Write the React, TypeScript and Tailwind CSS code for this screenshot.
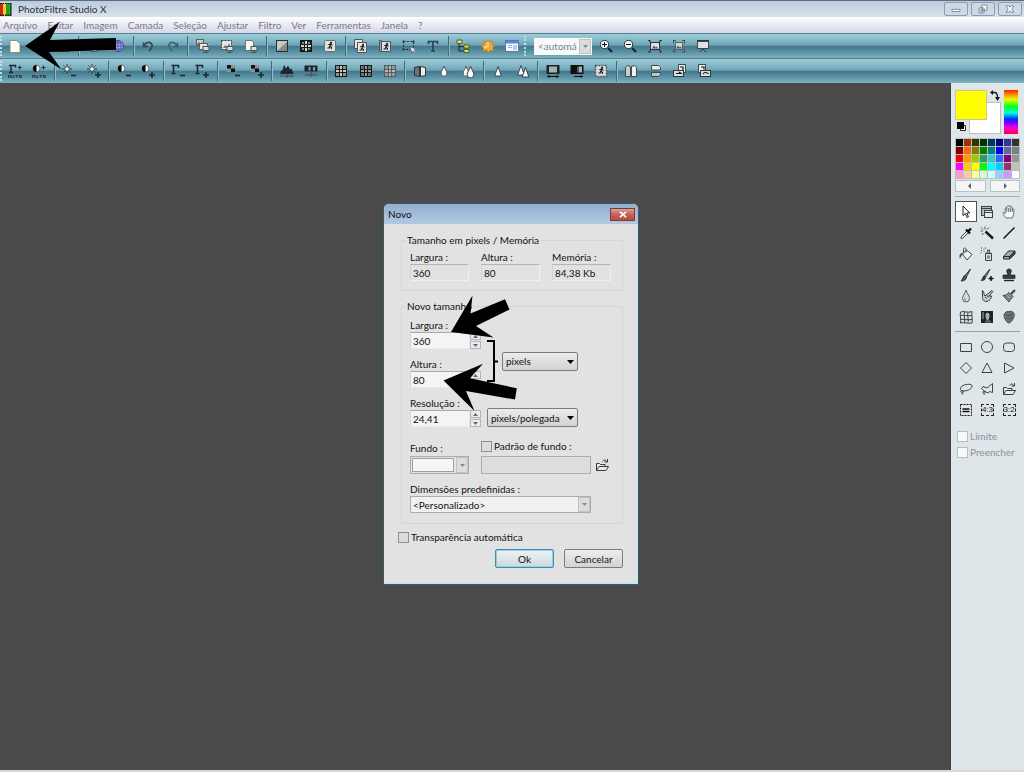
import { useState } from "react";
import type { ReactNode } from "react";

const INK = "#1c2a33";

function Svg({ children, size = 14 }: { children: ReactNode; size?: number }) {
  return (
    <svg width={size} height={size} viewBox="0 0 14 14" fill="none" aria-hidden="true" className="shrink-0">
      {children}
    </svg>
  );
}

const runner = (x: number, y: number) => (
  <g transform={`translate(${x} ${y})`} stroke="#111" strokeWidth="1.1">
    <circle cx="3.6" cy="0.8" r="0.5" fill="#111" />
    <path d="M3.2 2 2.4 4.2 4 5.4 3.6 7M2.4 4.2 1.6 6H0M0.8 2.8 3.2 2 5 3.4" />
  </g>
);

const monitor = (x: number, y: number) => (
  <g transform={`translate(${x} ${y})`}>
    <rect x="0.5" y="0.5" width="6" height="4" fill="#dde0e2" stroke="#4b5257" />
    <path d="M3.5 5v1.5M1 6.5h5" stroke="#4b5257" />
  </g>
);

const gridSquares = (bg: string, fg: string) => (
  <>
    <rect x="1" y="1" width="12" height="12" fill={bg} />
    <path d="M2 2h3v3H2zM6 2h2v3H6zM9 2h3v3H9zM2 6h3v2H2zM6 6h2v2H6zM9 6h3v2H9zM2 9h3v3H2zM6 9h2v3H6zM9 9h3v3H9z" fill={fg} />
    <path d="M2 2h3v3H2zM9 2h3v3H9zM2 9h3v3H2zM9 9h3v3H9z" fill={bg} opacity="0.35" />
  </>
);

const plus = <path d="M11 8v6M8 11h6" stroke={INK} strokeWidth="1.6" />;
const minus = <path d="M9 11.5h5" stroke={INK} strokeWidth="1.6" />;
const sun = (
  <>
    <circle cx="5" cy="5" r="2.2" fill="#fff" stroke={INK} strokeWidth="0.8" />
    <path d="M5 0v2M5 8v2M0 5h2M8 5h2M1.5 1.5l1.2 1.2M7.4 7.4l1.2 1.2M8.5 1.5 7.3 2.7M1.5 8.5l1.2-1.2" stroke={INK} strokeWidth="0.9" />
  </>
);
const half = (
  <>
    <circle cx="4.5" cy="4.5" r="3.4" fill="#f5f5f5" stroke={INK} strokeWidth="0.6" />
    <path d="M4.5 1a3.5 3.5 0 0 0 0 7z" fill="#000" />
  </>
);
const gamma = <path d="M0.5 1.500h7.500M7.500 1v3M2.500 1.500v8M0.500 9.500h4" stroke={INK} strokeWidth="1.5" />;
const checks = (
  <>
    <rect x="1" y="1" width="8" height="7" fill="#8d9497" />
    <path d="M1 1h4v3.5H1zM5 4.5h4V8H5z" fill="#111" />
  </>
);
const auto = <path d="M0.5 14v-2.5h2V14M4 11.5V14h2v-2.5M7.5 11.5h2.5M8.7 11.5V14M11.3 11.5h2V14h-2z" stroke={INK} strokeWidth="0.8" />;
const drop = (x: number, s: number) => (
  <path transform={`translate(${x} 2) scale(${s})`} d="M3.5 0C3 2.6.6 5 .6 7.4a2.9 2.9 0 0 0 5.8 0C6.4 5 4 2.6 3.5 0z" fill="#fafafa" stroke="#44515a" strokeWidth="0.9" />
);
const cone = (x: number, y: number) => (
  <path d={`M${x} ${y}l3.4 9.5h-6.8z`} fill="#fafafa" stroke="#2b3840" strokeWidth="0.9" />
);

const icons: Record<string, ReactNode> = {
  novo: <path d="M2 1.500h6.500l3.500 3v9H2z" fill="#fffef2" stroke="#7b8180" strokeWidth="0.8" />,
  abrir: <path d="M1 12V3h4l1 1.500h6V12z" fill="#e3c36a" stroke="#555" />,
  salvar: <path d="M1.500 1.500h11v11h-11zM4 2v4h6V2M4 12V8h6v4" fill="#ccd" stroke="#445" />,
  imprimir: <path d="M1.500 5.500h11v5h-11zM3.500 5V1.500h7V5M3.500 10.500v2h7v-2" fill="#d8dadc" stroke="#4b5257" />,
  internet: (
    <>
      <circle cx="7" cy="7" r="5.500" fill="#aab4ea" stroke="#3e3f9a" />
      <path d="M1.500 7h11M7 1.500v11M2.500 4h9M2.500 10h9M7 1.500c-4 3-4 8 0 11M7 1.500c4 3 4 8 0 11" stroke="#4a3f9a" strokeWidth="0.8" />
    </>
  ),
  desfazer: <path d="M2.500 3.500v4h4M2.500 7.500c2-4.500 7-5.500 8.500-2 1 2.500-1 4-3 6.500" stroke="#33444d" strokeWidth="1.500" />,
  refazer: <path d="M11.500 3.500v4h-4M11.500 7.500c-2-4.500-7-5.500-8.500-2-1 2.500 1 4 3 6.500" stroke="#3f5f6c" strokeWidth="1.500" />,
  duplicar: (
    <>
      <rect x="0.500" y="0.500" width="7" height="6" fill="#c9cdcf" stroke="#59615f" />
      <path d="M1 5l2-2 1.500 1.500L6 3l1 3H1z" fill="#777" />
      <rect x="3.500" y="4.500" width="8" height="6" fill="#ebe6dc" stroke="#59615f" />
      {monitor(6.500, 7)}
    </>
  ),
  tamanho: (
    <>
      <rect x="1.500" y="1.500" width="10" height="9" fill="#e6e8e8" stroke="#30383c" strokeDasharray="2 1" />
      <path d="M3 9l2-3 2 2 2-4 2 5" fill="#777" />
      {monitor(6.500, 7)}
    </>
  ),
  tela: (
    <>
      <path d="M1.500 1.500h6l2 2v8h-8z" fill="#fbf9ef" stroke="#6c7376" />
      {monitor(6.500, 7)}
    </>
  ),
  cinza: (
    <>
      <path d="M2 2h11v10H2z" fill="#868b8e" />
      <path d="M2 2h11L2 12z" fill="#c5c9ca" />
      <rect x="1.500" y="1.500" width="11" height="11" stroke="#262f34" />
    </>
  ),
  indexadas: (
    <>
      <rect x="1" y="1" width="12" height="12" fill="#14191c" />
      <path d="M2 6h3v2H2zM6 2h2v3H6zM9 6h3v2H9zM6 9h2v3H6zM6 6h2v2H6z" fill="#d6d6c6" />
      <path d="M3 3h2v2H3zM9 3h2v2H9zM3 9h2v2H3zM9 9h2v2H9z" fill="#8c9072" />
    </>
  ),
  rgb: (
    <>
      <rect x="1.500" y="1.500" width="11" height="11" rx="1" fill="#dfe1e0" stroke="#6a7073" />
      {runner(4.500, 3)}
    </>
  ),
  camada: (
    <>
      <path d="M1.500 0.500h8v9h-8z" fill="#e8e8e0" stroke="#4f575b" />
      <path d="M4.500 3.500h9v10h-9z" fill="#e8e8e0" stroke="#4f575b" />
      {runner(6.500, 5)}
    </>
  ),
  mesclar: (
    <>
      <path d="M1.500 1.500h2v11h-2z" fill="#98a0a4" stroke="#4f575b" />
      <path d="M3.500 2.500h9v10h-9z" fill="#dcdfe3" stroke="#4f575b" />
      {runner(5.500, 4)}
    </>
  ),
  selecao: (
    <>
      <path d="M1.500 2.500h10v7M1.500 2.500v8h7" stroke="#1c2a33" strokeDasharray="2 1.500" />
      <path d="M0.500 1.500h2v2h-2zM10.500 1.500h2v2h-2zM0.500 9.500h2v2h-2z" fill="#333c41" />
      <path d="M8 8l6 2-2 1.200 2 2-1 .8-2-2-1 2z" fill="#e9edf2" stroke="#555c70" strokeWidth="0.600" />
    </>
  ),
  texto: <path d="M2.500 5v-2.500h9V5M7 2.500v9.500M5 12h4" stroke="#2b4450" strokeWidth="1.700" />,
  explorer: (
    <>
      <path d="M3 5v7h6M3 7.500h6" stroke="#20282c" />
      <path d="M1 1h5v3.500H1zM8 6h5v3H8zM8 10.500h5v3H8z" fill="#dfe04c" stroke="#3e4a20" strokeWidth="0.800" />
    </>
  ),
  plugins: (
    <>
      <path d="M3 1.500l2.500 1.700L7 .5l1.500 2.700L12 2l-1 3.300 2.700 1.700L11.500 9l1.500 3-3.500-.7L7 13.500 5.500 11 2 12.500l.7-3.500L.3 7l3-1.500z" fill="#efaa34" stroke="#b87418" strokeWidth="0.600" />
      <path d="M7 3v4l-4 2" stroke="#fbe6a6" strokeWidth="1.300" />
    </>
  ),
  painel: (
    <>
      <rect x="0.500" y="1.500" width="13" height="11" fill="#f4f7fd" stroke="#5a77b4" />
      <path d="M1 2h12v2.500H1z" fill="#5f87d2" />
      <path d="M3 6.500h4M3 8.500h4" stroke="#9fb0d0" />
      <rect x="8" y="6" width="4" height="5" fill="#b9c9e8" />
    </>
  ),
  mais: (
    <>
      <circle cx="5.500" cy="5.500" r="4.200" fill="#eef5f7" stroke="#26353d" />
      <path d="M5.500 3v5M3 5.500h5" stroke="#111" />
      <path d="M9 9l4 4" stroke="#182040" strokeWidth="2.200" />
    </>
  ),
  menos: (
    <>
      <circle cx="5.500" cy="5.500" r="4.200" fill="#eef5f7" stroke="#26353d" />
      <path d="M3 5.500h5" stroke="#111" />
      <path d="M9 9l4 4" stroke="#182040" strokeWidth="2.200" />
    </>
  ),
  ajustar: (
    <>
      <rect x="2.500" y="3.500" width="9" height="7" fill="#dfe3e3" stroke="#30383c" />
      <path d="M4 9.500l2-3 1.500 2 1-1 2 2" fill="#555" />
      <path d="M0.500 1.500l3 2.500M13.500 1.500l-3 2.500M0.500 13l3-2.500M13.500 13l-3-2.500M0.500 1.500h2M11.500 1.500h2M0.500 13h2M11.500 13h2" stroke="#20292e" />
    </>
  ),
  real: (
    <>
      <rect x="3.500" y="3.500" width="7" height="7" fill="#d4d9da" stroke="#556268" />
      <path d="M4 9.500l2-3 1.500 2 1-1 1.500 2" fill="#555" />
      <path d="M1 1.500h3M10 1.500h3M1 13h3M10 13h3M1.500 1.500v3M12.500 1.500v3M1.500 13v-3M12.500 13v-3" stroke="#45545b" />
    </>
  ),
  cheia: (
    <>
      <path d="M1 2h12" stroke="#2b363c" strokeWidth="2" />
      <rect x="1.500" y="2.500" width="11" height="7" fill="#dfe3e4" stroke="#3b474d" />
      <path d="M4 13l3-3 3 3" stroke="#2b363c" />
    </>
  ),
  nivelAuto: (
    <>
      <path d="M1 1.500h7M7.500 1v2.500M3 1.500v7M1 8.500h4" stroke={INK} strokeWidth="1.500" />
      <path d="M10 3.500h3.500M11.700 1.500v4" stroke={INK} />
      {auto}
    </>
  ),
  contrasteAuto: (
    <>
      <circle cx="4.500" cy="4.500" r="3.400" fill="#f5f5f5" stroke={INK} strokeWidth="0.600" />
      <path d="M4.500 1a3.500 3.500 0 0 0 0 7z" fill="#000" />
      <path d="M9.500 3.500h4M11.500 1.500v4" stroke={INK} />
      {auto}
    </>
  ),
  brilhoMenos: <>{sun}{minus}</>,
  brilhoMais: <>{sun}{plus}</>,
  contrasteMenos: <>{half}{minus}</>,
  contrasteMais: <>{half}{plus}</>,
  gamaMenos: <>{gamma}{minus}</>,
  gamaMais: <>{gamma}{plus}</>,
  satMenos: <>{checks}{minus}</>,
  satMais: <>{checks}{plus}</>,
  histograma: (
    <>
      <path d="M0.500 10V7.500l2-1.500 1.500-5 2 3.500 2-3 2 4 1.500-1 2 5v.500z" fill="#1b272e" />
      <path d="M0 12h14" stroke="#3d4a51" />
      <path d="M7 10v4" stroke="#3d4a51" />
    </>
  ),
  niveis: (
    <>
      <rect x="0.500" y="1.500" width="13" height="6" fill="#1b272e" />
      <path d="M4.500 3h2v3.500h-2zM9 3h2v3.500H9z" fill="#8f9a9f" />
      <path d="M1 11h12M7 8v5" stroke="#3d4a51" />
    </>
  ),
  grade1: gridSquares("#14191c", "#d3d2c5"),
  grade2: gridSquares("#14191c", "#98a0a2"),
  grade3: gridSquares("#555c5f", "#b3babb"),
  espelho: (
    <>
      <path d="M1.500 3.500l5-1v10l-5-1z" fill="#6c7579" stroke="#2a3236" />
      <path d="M7.500 2.500l5 1v8l-5 1z" fill="#eceeed" stroke="#2a3236" />
    </>
  ),
  suave: drop(3.500, 1),
  muitoSuave: <>{drop(1.500, 1)}{drop(5.500, 1.150)}</>,
  nitidez: cone(7, 2.500),
  muitaNitidez: <>{cone(5, 1.500)}{cone(9.500, 3.500)}</>,
  largura: (
    <>
      <path d="M0.500 1h13v9h-13z" fill="#1b2225" />
      <path d="M3 2.500h8v6H3z" fill="#a9b0b2" />
      <path d="M1 12.500h12M3 11v3M11 11v3" stroke="#111" />
    </>
  ),
  degrade: (
    <>
      <path d="M0.500 1h13v9h-13z" fill="#0d0f10" />
      <path d="M7 2.500h2v6H7z" fill="#52595c" />
      <path d="M9 2.500h3v6H9z" fill="#a9b0b2" />
      <path d="M4 12.500h9M11 11v3" stroke="#111" />
    </>
  ),
  mosaico: (
    <>
      <rect x="1.500" y="1.500" width="11" height="11" fill="#dadcd9" stroke="#4f5a5f" strokeDasharray="2 1" strokeWidth="1.500" />
      {runner(4.500, 3)}
    </>
  ),
  simetriaH: (
    <>
      <path d="M1.500 3.500l2-2 3 1v10h-5z" fill="#c7cbc9" stroke="#414a4f" />
      <path d="M12.500 3.500l-2-2-3 1v10h5z" fill="#f0f1ee" stroke="#414a4f" />
    </>
  ),
  simetriaV: (
    <>
      <path d="M2.500 1.500h7l2 2v2.500h-9z" fill="#eceeec" stroke="#414a4f" />
      <path d="M2.500 8.500h9v2l-2 2h-7z" fill="#bfc5c6" stroke="#414a4f" />
    </>
  ),
  girarE: (
    <>
      <rect x="5.500" y="0.500" width="7" height="8" fill="#eceeec" stroke="#414a4f" />
      <rect x="0.500" y="6.500" width="10" height="6" fill="#dcdfe0" stroke="#2d363a" />
      <path d="M3 9.500h5l-2-1.500M7 3h3v3" stroke="#111" strokeWidth="1.200" />
    </>
  ),
  girarD: (
    <>
      <rect x="1.500" y="0.500" width="7" height="8" fill="#eceeec" stroke="#414a4f" />
      <rect x="3.500" y="6.500" width="10" height="6" fill="#dcdfe0" stroke="#2d363a" />
      <path d="M4 3h3v2.500M6 10c1-2 4-2 5.500 0" stroke="#111" strokeWidth="1.200" />
    </>
  ),
};

const topBar = [
  ["novo", "abrir", "salvar"],
  ["imprimir", "internet"],
  ["desfazer", "refazer"],
  ["duplicar", "tamanho", "tela"],
  ["cinza", "indexadas", "rgb"],
  ["camada", "mesclar", "selecao", "texto"],
  ["explorer", "plugins", "painel"],
];

const zoomBar = [["mais", "menos", "ajustar", "real", "cheia"]];

const filterBar = [
  ["nivelAuto", "contrasteAuto"],
  ["brilhoMenos", "brilhoMais"],
  ["contrasteMenos", "contrasteMais"],
  ["gamaMenos", "gamaMais"],
  ["satMenos", "satMais"],
  ["histograma", "niveis"],
  ["grade1", "grade2", "grade3"],
  ["espelho", "suave", "muitoSuave"],
  ["nitidez", "muitaNitidez"],
  ["largura", "degrade", "mosaico"],
  ["simetriaH", "simetriaV", "girarE", "girarD"],
];

function ToolGroups({ groups, className }: { groups: string[][]; className: string }) {
  return (
    <div className={`flex h-full items-center ${className}`}>
      {groups.map((group, g) => (
        <div key={group[0]} className="contents">
          {g > 0 && (
            <span className="flex h-full w-1.5 shrink-0 items-center justify-center">
              <span className="h-5 w-px bg-[#3f6b79] shadow-[1px_0_0_#8fbecb]" />
            </span>
          )}
          {group.map((name) => (
            <button key={name} type="button" aria-label={name} className="flex min-w-0 flex-1 items-center justify-center pb-px">
              <Svg>{icons[name]}</Svg>
            </button>
          ))}
        </div>
      ))}
    </div>
  );
}

function Grip() {
  return <span className="h-5 w-0 shrink-0 border-l-2 border-dotted border-[#b9dfe9]" />;
}

const palette = [
  "#000000", "#993300", "#333300", "#003300", "#003366", "#000080", "#333399", "#333333",
  "#800000", "#ff6600", "#808000", "#008000", "#008080", "#0000ff", "#666699", "#808080",
  "#ff0000", "#ff9900", "#99cc00", "#339966", "#33cccc", "#3366ff", "#800080", "#969696",
  "#ff00ff", "#ffcc00", "#ffff00", "#00ff00", "#00ffff", "#00ccff", "#993366", "#c0c0c0",
  "#ff99cc", "#ffcc99", "#ffff99", "#ccffcc", "#ccffff", "#99ccff", "#cc99ff", "#ffffff",
];

const S = "#3c4448";

const tools: { name: string; icon: ReactNode }[] = [
  { name: "Seleção", icon: <path d="M4 1v9.500l2.300-2 1.700 4 1.500-.7-1.700-3.800h3z" fill="#fff" stroke="#222" /> },
  {
    name: "Gerenciador de camadas",
    icon: (
      <>
        <rect x="1.500" y="1.500" width="10" height="9" fill="#b4bcc0" stroke={S} />
        <rect x="4.500" y="5.500" width="8" height="7" fill="#e4e8ea" stroke={S} />
        <path d="M2 3.500h9M5 7.500h7" stroke={S} />
      </>
    ),
  },
  { name: "Mão", icon: <path d="M4 13C2 10.500 .5 8.500 1 7.700s1.600 0 2.200 1V3.500c0-1.200 1.600-1.200 1.600 0V2c0-1.300 1.800-1.300 1.800 0V1.500c0-1.200 1.800-1.200 1.800 0v1c0-1.200 1.800-1 1.800 0v2c0-1 1.700-1 1.700.3 0 3-.3 6-1.700 8.200zM4.800 3.500V7M6.600 3V7M8.400 3V7M10.200 4V7" fill="#f4f6f7" stroke="#5c6468" strokeWidth="0.900" /> },
  {
    name: "Conta-gotas",
    icon: (
      <>
        <path d="M8 5l-6 6v1.500h1.500l6-6" fill="#e6e9ea" stroke={S} />
        <path d="M7 3.500l4 4M9 5.500l3-3" stroke="#0a0d0f" strokeWidth="2.400" />
      </>
    ),
  },
  {
    name: "Varinha mágica",
    icon: (
      <>
        <path d="M5.500 5.500l7.500 7" stroke="#16191b" strokeWidth="2.400" />
        <path d="M5 .5v3M1 1.500l2 2M.5 5h2.500M2 9l1.500-2M9 1.500l-2 2" stroke={S} strokeWidth="0.900" />
      </>
    ),
  },
  { name: "Linha", icon: <path d="M1.500 12.500L12.500 1.500" stroke="#1b1f22" strokeWidth="1.600" /> },
  {
    name: "Preenchimento",
    icon: (
      <>
        <path d="M3.500 7l4-4 5.500 4.500-5 5.500z" fill="#f0f1f2" stroke={S} />
        <path d="M7 5.500V2.500c0-2-2.500-2-2.500 0V6" stroke={S} />
        <path d="M4 6c-3 0-4.500 2-3 6 .5-2 1.500-3.500 3-4.500z" fill="#4a5256" />
      </>
    ),
  },
  {
    name: "Spray",
    icon: (
      <>
        <path d="M5.500 6.500h6v7h-6zM6.500 6c0-1.500 4-1.500 4 0M7.500 4.500V3h2v1.500" fill="#d9dddf" stroke={S} />
        <path d="M7 8.500h3v3H7z" fill="#7d868a" />
        <path d="M1 1h1M3.500 2h1M1 3.500h1M3.500 4.500h1M6 1h-1M.5 6h1" stroke={S} />
      </>
    ),
  },
  {
    name: "Borracha",
    icon: (
      <>
        <path d="M1.500 9.500l5-5.500h6.500l-5 5.500zM1.500 9.500V12h6V9.500" fill="#a3abaf" stroke="#24292c" />
        <path d="M7.500 12l5.500-5V4l-5.500 5.500z" fill="#444b4f" stroke="#24292c" />
      </>
    ),
  },
  {
    name: "Pincel",
    icon: (
      <>
        <path d="M11.500 1L6 7.500l1.500 1.300z" fill="#9aa2a5" stroke="#2a2f32" />
        <path d="M6 7.500C3.500 8 4 11 2 13c3 .3 5.500-1 5.500-4.200z" fill="#4a5256" stroke="#222" strokeWidth="0.700" />
      </>
    ),
  },
  {
    name: "Pincel avançado",
    icon: (
      <>
        <path d="M10 1L4.500 7.500 6 8.800z" fill="#9aa2a5" stroke="#2a2f32" />
        <path d="M4.500 7.500C2 8 2.500 11 .5 13c3 .3 5.500-1 5.500-4.200z" fill="#33393c" />
        <path d="M11 8v5M8.500 10.500h5" stroke="#111" strokeWidth="1.500" />
      </>
    ),
  },
  {
    name: "Carimbo",
    icon: (
      <>
        <path d="M4.700 2.700c0-2.300 4.600-2.300 4.600 0S8.300 5 8.300 7h4.700v3.500H1V7h4.700c0-2-1-2.300-1-4.300z" fill="#363d40" stroke="#222" strokeWidth="0.700" />
        <path d="M2 12.500h10" stroke="#222" strokeWidth="1.400" />
      </>
    ),
  },
  { name: "Desfoque", icon: <path d="M7 1C6.500 4 3.500 6.500 3.500 9.500a3.500 3.500 0 0 0 7 0C10.500 6.500 7.500 4 7 1zM5.500 9.500c0 1 .5 1.500 1.500 2" fill="#d3dadd" stroke="#5a6266" /> },
  {
    name: "Borrar",
    icon: (
      <>
        <path d="M2.500 1.500c2 1 1 4.500 2.500 5.500l7-5.500 1 1-4 4.500h2.500c0 2.500-2 4.500-4.500 5.500-3 0-5-1.500-4.500-5 .2-2-.5-4 0-6z" fill="#c9ced0" stroke="#33393c" />
        <path d="M5 8l2 1.500M6.500 6.500L9 8" stroke="#33393c" />
      </>
    ),
  },
  {
    name: "Vassoura",
    icon: (
      <>
        <path d="M13 1L9 5" stroke={S} strokeWidth="2.200" />
        <path d="M1 6.500c3 0 4-1 6-3l4 4c-2 2-3 3-4 5.500z" fill="#9aa3a7" stroke="#33393c" />
        <path d="M3.500 7l4 4M6 5.500l4 4" stroke="#33393c" strokeWidth="0.800" />
      </>
    ),
  },
  { name: "Deformar", icon: <path d="M1.500 2c3-1.500 7.500 1.500 11.500-.5-1 3 1 8 0 11.500-3.500 1-7.500-1-11.500 0 1-3.500-1-7.500 0-11zM5.500 2c-1 3 1 7 0 11M9 2.500c-1 3 1 7 0 10M1.500 5.500c3-1 7 1 11 0M1.500 9.500c3-1 7 1 11.500 0" fill="#dfe3e5" stroke="#363d40" /> },
  {
    name: "Retrato",
    icon: (
      <>
        <rect x="1" y="1" width="12" height="12" fill="#1e2325" />
        <path d="M5.500 5c0-3 4-3 4 0 0 4-1 5-2 5s-2-1-2-5z" fill="#a8afb1" />
        <path d="M2 2h2v7H2zM9.500 10l2 2.500h-7l1.500-2z" fill="#626a6d" />
      </>
    ),
  },
  {
    name: "Arte",
    icon: (
      <>
        <path d="M3 3c1-2 3-1 4-1.500C8 1 11 1 11.500 3c1.500 1 .5 4 0 5-1 2-3 5-4.500 5S4 11 3 9 1.500 4 3 3z" fill="#6b7377" stroke="#4a5054" />
        <path d="M4 5l3 1 3-2M4.500 8l3 1 3-2" stroke="#4a5054" />
      </>
    ),
  },
];

const shapes: { name: string; icon: ReactNode }[] = [
  { name: "Retângulo", icon: <path d="M1.500 3.500h11v8h-11z" stroke={S} /> },
  { name: "Elipse", icon: <circle cx="7" cy="7" r="5.500" stroke={S} /> },
  { name: "Retângulo arredondado", icon: <rect x="1.500" y="3" width="11" height="8.500" rx="3" stroke={S} /> },
  { name: "Losango", icon: <path d="M7 1.500L12.500 7 7 12.500 1.500 7z" stroke={S} /> },
  { name: "Triângulo", icon: <path d="M7 2l5 9.500H2z" stroke={S} /> },
  { name: "Triângulo direito", icon: <path d="M2.500 2l9.500 5-9.500 5z" stroke={S} /> },
  { name: "Laço", icon: <path d="M4 9C.5 9 .5 5 4 3.500S13 1.500 13 4s-3 5-9 5zM4 9c-2-1-3 .5-1.500 1.500S5 10 4 9zM3 10.500c1 1 0 2 0 2.500" stroke={S} /> },
  { name: "Polígono", icon: <path d="M5 9.500L1.500 6.500 3 4.500 7 6l5.500-4.500v9l-3-1L8 11 5 9.500c-2-.5-3 .5-1.500 1.500S5.500 10.500 5 9.500M3.500 11c1 .5.500 1.500.5 2" stroke={S} /> },
  { name: "Carregar seleção", icon: <FolderShape /> },
  {
    name: "Proporção livre",
    icon: (
      <>
        <rect x="1.500" y="1.500" width="11" height="11" stroke="#111" strokeDasharray="2 1" />
        <path d="M3.500 6h7M3.500 8.500h7" stroke="#111" strokeWidth="1.500" />
      </>
    ),
  },
];

function FolderShape() {
  return (
    <>
      <path d="M1.500 12.500V5.500h3l1 1h4.500v2M1.500 12.500l2.500-4h9.500l-2.500 4z" fill="#ebebe8" stroke="#363c40" />
      <path d="M7.500 3.500c1-2 3.500-2 4.500.5M12.500 1v3h-3" stroke="#363c40" />
    </>
  );
}

function RatioBox({ text }: { text: string }) {
  return (
    <span className="flex h-3 w-[13px] items-center justify-center border border-dashed border-[#222] font-['Liberation_Sans',sans-serif] text-[8px] leading-none text-[#111]">
      {text}
    </span>
  );
}

function Sidebar() {
  const [active, setActive] = useState("Seleção");
  return (
    <aside className="flex w-[73px] shrink-0 flex-col bg-[#dfe6ea] px-1 pt-[7px]">
      <div className="flex justify-between pr-0.5">
        <div className="relative h-11 w-[46px]">
          <button type="button" aria-label="Cor de fundo" className="absolute right-0 bottom-0 h-8 w-8 border border-[#b9c0c3] bg-white" />
          <button type="button" aria-label="Cor de frente" className="absolute top-0 left-0 h-[30px] w-8 border border-[#c8c890] bg-[#ffff00]" />
          <svg className="absolute -top-px right-0" width="12" height="13" viewBox="0 0 12 13" fill="none">
            <path d="M3 3.500h2.500c2 0 3 1.500 3 5" stroke="#111" strokeWidth="1.300" />
            <path d="M4 1v5L1 3.500zM6 8h5l-2.500 4z" fill="#111" />
          </svg>
          <svg className="absolute bottom-0.5 left-0.5" width="10" height="10" viewBox="0 0 10 10">
            <path d="M3.500 3.500h5v5h-5z" fill="#fff" stroke="#222" />
            <path d="M0 0h7v7H0z" fill="#000" />
          </svg>
        </div>
        <div className="h-11 w-3.5 bg-[linear-gradient(#ff2000,#ffb000_14%,#e0ff00_22%,#00ff20_38%,#00ffe0_52%,#0030ff_66%,#8000ff_76%,#ff00d0_86%,#ff0040)]" />
      </div>

      <div className="mt-1 grid grid-cols-8 gap-px border border-[#b9c0c4] bg-[#b9c0c4]">
        {palette.map((c, i) => (
          <span key={i} className="h-[7px]" style={{ backgroundColor: c }} />
        ))}
      </div>
      <div className="mt-px grid grid-cols-2 gap-1">
        {["M5 1v6L2 4z", "M3 1v6l3-3z"].map((d, i) => (
          <button key={d} type="button" aria-label={i ? "Próxima paleta" : "Paleta anterior"} className="flex h-3 items-center justify-center border border-[#b9bfc3] bg-[#f3f5f6]">
            <svg width="8" height="8" viewBox="0 0 8 8"><path d={d} fill="#5a6268" /></svg>
          </button>
        ))}
      </div>

      <hr className="mt-1 border-[#9fb0b9]" />
      <div className="mt-1 grid grid-cols-3">
        {tools.map((t) => (
          <button
            key={t.name}
            type="button"
            aria-label={t.name}
            onClick={() => setActive(t.name)}
            className={`flex h-[21px] items-center justify-center ${active === t.name ? "border border-[#4d5357] bg-white" : ""}`}
          >
            <Svg>{t.icon}</Svg>
          </button>
        ))}
      </div>
      <hr className="mt-1 border-[#8fa3ad]" />
      <div className="mt-1 grid grid-cols-3">
        {shapes.map((s) => (
          <button key={s.name} type="button" aria-label={s.name} className="flex h-[21px] items-center justify-center">
            <Svg>{s.icon}</Svg>
          </button>
        ))}
        {["4:3", "3:2"].map((r) => (
          <button key={r} type="button" className="flex h-[21px] items-center justify-center">
            <RatioBox text={r} />
          </button>
        ))}
      </div>

      <div className="mt-2 flex flex-col pl-0.5 text-[#8b9296]">
        {["Limite", "Preencher"].map((label) => (
          <label key={label} className="flex h-4 items-center gap-0.5">
            <input type="checkbox" className="h-[11px] w-[11px] shrink-0 appearance-none border border-[#b6bcc0] bg-[#f8f9fa] checked:bg-[#4a90b8]" />
            {label}
          </label>
        ))}
      </div>
    </aside>
  );
}

function Field({ id, label, value }: { id: string; label: string; value: string }) {
  return (
    <div className="flex w-[59px] flex-col">
      <label htmlFor={id}>{label}</label>
      <input id={id} readOnly defaultValue={value} className="h-[17px] w-full border border-t-[#b5b5b5] border-r-[#efefef] border-b-[#efefef] border-l-[#d2d2d2] bg-transparent px-0.5" />
    </div>
  );
}

function NumberField({ id, label, initial }: { id: string; label: string; initial: string }) {
  const [value, setValue] = useState(initial);
  const step = (n: number) => setValue((v) => String(Math.max(1, (parseInt(v, 10) || 0) + n)));
  return (
    <div className="flex flex-col">
      <label htmlFor={id}>{label}</label>
      <div className="flex h-[17px] w-[71px]">
        <input
          id={id}
          value={value}
          onChange={(e) => setValue(e.target.value)}
          className="min-w-0 flex-1 border border-t-[#a9a9a9] border-r-[#e9e9e9] border-b-[#e9e9e9] border-l-[#d6d6d6] bg-[#f4f4f4] px-0.5"
        />
        <div className="flex w-[11px] flex-col gap-px">
          {[1, -1].map((n) => (
            <button key={n} type="button" aria-label={n > 0 ? "Aumentar" : "Diminuir"} onClick={() => step(n)} className="flex flex-1 items-center justify-center border border-[#b6b6b6] bg-[#ebebeb]">
              <svg width="5" height="3" viewBox="0 0 5 3"><path d={n > 0 ? "M0 3h5L2.500 0z" : "M0 0h5L2.500 3z"} fill="#4c6a8a" /></svg>
            </button>
          ))}
        </div>
      </div>
    </div>
  );
}

function UnitSelect({ label, options, className }: { label: string; options: string[]; className: string }) {
  return (
    <div className={`relative ${className}`}>
      <select aria-label={label} className="block h-[19px] w-full appearance-none rounded-xs border border-[#7c7c7c] bg-linear-to-b from-[#ececec] to-[#d2d2d2] px-[3px]">
        {options.map((o) => <option key={o}>{o}</option>)}
      </select>
      <svg className="pointer-events-none absolute top-2 right-1" width="7" height="4" viewBox="0 0 7 4"><path d="M0 0h7L3.500 4z" fill="#000" /></svg>
    </div>
  );
}

function DropArrow() {
  return (
    <span className="pointer-events-none absolute inset-y-px right-px flex w-3 items-center justify-center border border-[#c2c2c2] bg-[#dcdcdc]">
      <svg width="5" height="3" viewBox="0 0 5 3"><path d="M0 0h5L2.500 3z" fill="#8a8a8a" /></svg>
    </span>
  );
}

const check = "h-[11px] w-[11px] shrink-0 appearance-none border border-[#8f8f8f] bg-[#dcdcdc] checked:bg-[#4a90b8]";

function NewImageDialog() {
  return (
    <section
      role="dialog"
      aria-label="Novo"
      className="absolute top-[203px] left-[383px] flex w-64 flex-col rounded-t-md border border-[#3a5c69] bg-[#e2e2e2] text-[#111] shadow-[inset_-1px_-1px_0_#b8e6f2]"
    >
      <header className="flex h-5 items-center justify-between rounded-t-md bg-linear-to-b from-[#91aed0] to-[#b3c9e2] pr-[3px] pl-1">
        <h2>Novo</h2>
        <button type="button" aria-label="Fechar" className="flex h-[13px] w-[25px] items-center justify-center border border-[#7c3a36] bg-linear-to-b from-[#dba097] via-[#c4625a] to-[#bd4a3c]">
          <svg width="8" height="7" viewBox="0 0 8 7"><path d="M1 .8l6 5.400M7 .8L1 6.200" stroke="#fff" strokeWidth="1.700" /></svg>
        </button>
      </header>

      <form className="flex flex-col px-[15px] pt-[9px] pb-4" onSubmit={(e) => e.preventDefault()}>
        <fieldset className="ml-0.5 border border-[#d6d6d6] px-2 pb-[9px]">
          <legend className="-ml-1 px-px">Tamanho em pixels / Memória</legend>
          <div className="mt-[3px] flex gap-3">
            <Field id="cur-w" label="Largura :" value="360" />
            <Field id="cur-h" label="Altura :" value="80" />
            <Field id="cur-mem" label="Memória :" value="84,38 Kb" />
          </div>
        </fieldset>

        <fieldset className="mt-2 ml-0.5 border border-[#d6d6d6] px-2 pb-2.5">
          <legend className="-ml-1 px-px">Novo tamanho</legend>
          <div className="mt-[5px] flex items-center">
            <div className="flex flex-col gap-2">
              <NumberField id="new-w" label="Largura :" initial="360" />
              <NumberField id="new-h" label="Altura :" initial="80" />
            </div>
            <svg className="mt-4 ml-1.5" width="11" height="43" viewBox="0 0 11 43" fill="none">
              <path d="M0 1h7v40H0M7 21.500h4" stroke="#000" strokeWidth="2" />
            </svg>
            <UnitSelect label="Unidade" className="mt-4 ml-1 w-[76px]" options={["pixels", "cm", "%"]} />
          </div>
          <div className="mt-2 flex items-end gap-1.5">
            <NumberField id="res" label="Resolução :" initial="24,41" />
            <UnitSelect label="Unidade de resolução" className="w-[91px]" options={["pixels/polegada", "pixels/cm"]} />
          </div>

          <div className="mt-3 flex items-end">
            <div className="w-[59px]">
              <label htmlFor="bg">Fundo :</label>
              <div className="relative mt-px">
                <select id="bg" className="block h-[18px] w-full appearance-none border border-[#adadad] bg-[#e4e4e4]">
                  <option aria-label="Branco" />
                </select>
                <span className="pointer-events-none absolute top-0.5 left-0.5 h-3.5 w-[42px] border border-[#a0a0a0] bg-[#f6f6f6]" />
                <DropArrow />
              </div>
            </div>
            <div className="ml-3 w-[110px]">
              <label className="flex items-center gap-0.5 whitespace-nowrap">
                <input type="checkbox" className={check} />
                Padrão de fundo :
              </label>
              <input aria-label="Arquivo do padrão" className="mt-[3px] block h-[18px] w-full border border-[#adadad] bg-[#dddddd] px-0.5" />
            </div>
            <button type="button" aria-label="Procurar" className="mb-0.5 ml-1">
              <Svg><FolderShape /></Svg>
            </button>
          </div>

          <div className="mt-2 w-[181px]">
            <label htmlFor="preset">Dimensões predefinidas :</label>
            <div className="relative">
              <select id="preset" className="block h-[17px] w-full appearance-none border border-[#adadad] bg-[#f1f1f1] px-0.5">
                <option>&lt;Personalizado&gt;</option>
              </select>
              <DropArrow />
            </div>
          </div>
        </fieldset>

        <label className="-ml-px mt-1.5 flex items-center gap-0.5 self-start">
          <input type="checkbox" className={check} />
          Transparência automática
        </label>
        <div className="mt-[5px] flex justify-end gap-2.5">
          <button type="submit" className="h-[19px] w-[59px] rounded-xs border border-[#3f8dae] bg-linear-to-b from-[#eef2f3] to-[#cfd8dc] shadow-[inset_0_0_0_1px_#8fd0e6]">
            Ok
          </button>
          <button type="button" className="h-[19px] w-[59px] rounded-xs border border-[#7c7c7c] bg-linear-to-b from-[#ededed] to-[#d3d3d3]">
            Cancelar
          </button>
        </div>
      </form>

      <svg className="pointer-events-none absolute top-[91px] left-[58px]" width="80" height="120" viewBox="442 295 80 120">
        <path d="M451 332L472.500 295.500 470.500 313.500 505 299.300 509.500 309.500 476 326 493.500 337.500z" />
        <path d="M443.500 380.500L483 363.700 470 378.300 516.800 388.300 515 399.500 466 391 474.500 411z" />
      </svg>
    </section>
  );
}

const menus = ["Arquivo", "Editar", "Imagem", "Camada", "Seleção", "Ajustar", "Filtro", "Ver", "Ferramentas", "Janela", "?"];

const winButtons = [
  { name: "Minimizar", icon: <path d="M1.500 7.500h11v3h-11z" fill="#fff" stroke="#5c6876" /> },
  { name: "Restaurar", icon: <path d="M5.500 1.500h7v7h-7zM1.500 5.500h7v7h-7zM4 8h2.500v2.500H4z" fill="#fff" stroke="#5c6876" /> },
  { name: "Fechar", icon: <path d="M1.500 2.500h4L7 4.500l1.500-2h4L9.500 7l3 4.500h-4L7 9.500l-1.500 2h-4L4.500 7z" fill="#fff" stroke="#5c6876" /> },
];

const barBg = "bg-[linear-gradient(#9fcbd8,#86bac9_25%,#70a4b4_46%,#457a8d_52%,#5b92a4_75%,#7fb3c2)]";

export default function App() {
  return (
    <div className="relative flex min-h-screen flex-col bg-[#4a4a4a] font-[Lato,'Open_Sans',sans-serif] text-[10px] leading-[14px]">
      <header className="flex h-[17px] items-center border-t border-[#5c6c82] bg-linear-to-b from-[#bccbdc] to-[#d9e3ec]">
        <svg width="12" height="13" viewBox="0 0 12 13" className="shrink-0">
          <path d="M0 0h4v13H0z" fill="#c92a16" />
          <path d="M3 0h4v13H3z" fill="#f2d21f" />
          <path d="M6 0h5v13H6z" fill="#2f9a2c" />
          <path d="M0 0h11M0 12.500h11" stroke="#111" strokeWidth="2" strokeDasharray="1.500 1" />
          <path d="M11 0v13" stroke="#111" />
        </svg>
        <h1 className="ml-1.5 flex-1 text-[#2b3238]">PhotoFiltre Studio X</h1>
        <div className="flex gap-[3px] pr-0.5">
          {winButtons.map((b) => (
            <button key={b.name} type="button" aria-label={b.name} className="flex h-3.5 w-6 items-center justify-center rounded-xs border border-[#8f9cac] bg-[#ccd8e4]">
              <Svg size={10}>{b.icon}</Svg>
            </button>
          ))}
        </div>
      </header>

      <nav className="flex h-4 items-center gap-2.5 bg-linear-to-b from-white via-[#e9e9f6] to-[#d6d7ea] pl-[3px] text-[#7b7b80]">
        {menus.map((m) => (
          <a key={m} href="#">{m}</a>
        ))}
      </nav>

      <div className={`flex h-[25px] items-center border-t border-[#54808f] ${barBg}`}>
        <Grip />
        <ToolGroups groups={topBar} className="w-[522px] pl-px" />
        <Grip />
        <div className="relative ml-2 h-[17px] w-[58px]">
          <select aria-label="Zoom" className="block h-full w-full appearance-none bg-[#f7f9fa] px-1 text-[#7d8286]">
            <option>&lt;automá</option>
          </select>
          <DropArrow />
        </div>
        <ToolGroups groups={zoomBar} className="ml-0.5 w-[121px]" />
      </div>
      <div className={`flex h-[25px] items-center border-t border-[#54808f] ${barBg}`}>
        <Grip />
        <ToolGroups groups={filterBar} className="w-[714px] pl-px" />
      </div>

      <div className="flex flex-1">
        <main className="flex-1 border-r border-[#39424a]" />
        <Sidebar />
      </div>
      <footer className="h-0.5 bg-[#dcd6d6]" />

      <NewImageDialog />
      <svg className="pointer-events-none absolute top-5 left-5" width="100" height="52" viewBox="20 20 100 52">
        <path d="M25 46L59.500 22 50 40 116 38v11.800L49 52l12.500 17.500z" />
      </svg>
    </div>
  );
}
